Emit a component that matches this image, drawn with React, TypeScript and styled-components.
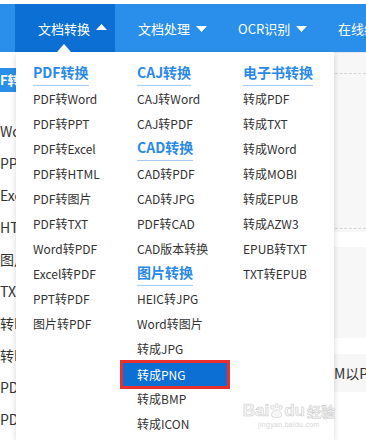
import React from "react";
import styled, { createGlobalStyle } from "styled-components";

const GlobalStyle = createGlobalStyle`
  html, body { margin: 0; padding: 0; background: #fff; }
  body { font-family: "Noto Sans CJK SC", "Noto Sans", sans-serif; }
`;

const Page = styled.div`
  position: relative;
  width: 366px;
  height: 440px;
  overflow: hidden;
  padding-top: 4px;
  box-sizing: border-box;
  display: flex;
  flex-direction: column;
  background: #fff;
`;

const NavBar = styled.div`
  height: 48px;
  flex: none;
  display: flex;
  background: #2a8fea;
  white-space: nowrap;
`;

const NavLead = styled.div`
  width: 15px;
  flex: none;
`;

const NavTab = styled.div<{ $active?: boolean }>`
  width: 100px;
  flex: none;
  box-sizing: border-box;
  padding-left: 23px;
  display: flex;
  align-items: center;
  gap: 6px;
  color: #fff;
  font-size: 13px;
  background: ${(p) => (p.$active ? "#0b6fd3" : "transparent")};
`;

const Caret = ({ up }: { up?: boolean }) => (
  <svg width="11" height="6" viewBox="0 0 11 6" style={{ marginTop: up ? -2 : 1 }}>
    <path d={up ? "M0 6 L5.5 0 L11 6 Z" : "M0 0 L11 0 L5.5 6 Z"} fill="#fff" />
  </svg>
);

const Body = styled.div`
  flex: 1;
  min-height: 0;
  display: flex;
`;

const LeftStrip = styled.div`
  width: 16px;
  flex: none;
  overflow: hidden;
  padding-top: 16px;
  white-space: nowrap;
  display: flex;
  flex-direction: column;
`;

const StripHead = styled.div`
  height: 24px;
  line-height: 24px;
  background: #2a8fea;
  color: #fff;
  font-weight: 700;
  font-size: 13px;
  margin-bottom: 23px;
`;

const StripRow = styled.div`
  height: 32px;
  line-height: 32px;
  font-size: 14px;
  color: #333;
`;

const Panel = styled.div`
  position: relative;
  z-index: 1;
  width: 318px;
  flex: none;
  background: #fff;
  box-shadow: 0 2px 6px rgba(0, 0, 0, 0.16);
  display: flex;
  padding-top: 9px;
  box-sizing: border-box;
`;

const Pointer = styled.div`
  position: absolute;
  top: -8px;
  left: 41px;
  width: 0;
  height: 0;
  border-left: 7.5px solid transparent;
  border-right: 7.5px solid transparent;
  border-bottom: 8px solid #fff;
`;

const Column = styled.div<{ $w: number }>`
  width: ${(p) => p.$w}px;
  flex: none;
  box-sizing: border-box;
  display: flex;
  flex-direction: column;
  align-items: flex-start;
  white-space: nowrap;
`;

const Heading = styled.div`
  margin-left: 17px;
  font-size: 14px;
  font-weight: 700;
  color: #2b89e8;
  line-height: 22px;
  padding-bottom: 2px;
  border-bottom: 1px solid #a6ccf4;
`;

const Item = styled.div<{ $hl?: boolean }>`
  box-sizing: border-box;
  font-size: 12px;
  color: ${(p) => (p.$hl ? "#fff" : "#333")};
  height: ${(p) => (p.$hl ? "29px" : "25px")};
  line-height: ${(p) => (p.$hl ? "23px" : "25px")};
  padding-left: ${(p) => (p.$hl ? "14px" : "17px")};
  width: ${(p) => (p.$hl ? "110px" : "auto")};
  background: ${(p) => (p.$hl ? "#0b6fd3" : "transparent")};
  border: ${(p) => (p.$hl ? "3px solid #e8302e" : "none")};
  margin: ${(p) => (p.$hl ? "-1px 0 -3px" : "0")};
`;

const RightStrip = styled.div`
  flex: 1;
  min-width: 0;
  display: flex;
  flex-direction: column;
  white-space: nowrap;
  overflow: hidden;
`;

const GreyBox = styled.div<{ $h: number; $gap: number; $top?: boolean }>`
  height: ${(p) => p.$h}px;
  margin-bottom: ${(p) => p.$gap}px;
  background: #f7f7f7;
  border-top: ${(p) => (p.$top ? "1px solid #e6e6e6" : "none")};
  box-sizing: border-box;
  font-size: 14px;
  color: #333;
  line-height: ${(p) => p.$h}px;
`;

const DashedFrame = styled.div`
  margin: 20px 0 0 1px;
  height: 154px;
  border-top: 1px dashed #d6d6d6;
  border-bottom: 1px dashed #d6d6d6;
`;

const Watermark = styled.div`
  position: absolute;
  z-index: 5;
  right: 31px;
  bottom: 12px;
  display: flex;
  flex-direction: column;
  align-items: center;
  color: #f6f6f6;
  -webkit-text-stroke: 0.6px #cfcfcf;
  pointer-events: none;
`;

const MarkTop = styled.div`
  display: flex;
  align-items: center;
  font-family: "Liberation Sans", sans-serif;
  font-weight: 700;
  font-size: 17px;
  line-height: 20px;
`;

const MarkCn = styled.span`
  font-family: "Noto Sans CJK SC", sans-serif;
  font-size: 14px;
  margin-left: 2px;
`;

const MarkSub = styled.div`
  font-family: "Liberation Sans", sans-serif;
  font-size: 7px;
  letter-spacing: 0.3px;
  -webkit-text-stroke: 0;
  color: #d6d6d6;
`;

const Paw = () => (
  <svg width="15" height="17" viewBox="0 0 18 20">
    <g fill="#f6f6f6" stroke="#cfcfcf" strokeWidth="0.8">
      <ellipse cx="4" cy="5" rx="2" ry="2.6" />
      <ellipse cx="9" cy="3" rx="2" ry="2.6" />
      <ellipse cx="14" cy="5" rx="2" ry="2.6" />
      <path d="M3 15 C3 10 6 8 9 8 C12 8 15 10 15 15 C15 18 3 18 3 15 Z" />
    </g>
  </svg>
);

const col1 = ["PDF转Word", "PDF转PPT", "PDF转Excel", "PDF转HTML", "PDF转图片", "PDF转TXT", "Word转PDF", "Excel转PDF", "PPT转PDF", "图片转PDF"];
const col3 = ["转成PDF", "转成TXT", "转成Word", "转成MOBI", "转成EPUB", "转成AZW3", "EPUB转TXT", "TXT转EPUB"];
const leftRows = ["Wo", "PP", "Exc", "HT", "图片", "TXT", "转P", "转PI", "PD", "PD"];

export default function App() {
  return (
    <Page>
      <GlobalStyle />
      <NavBar>
        <NavLead />
        <NavTab $active>
          文档转换 <Caret up />
        </NavTab>
        <NavTab>
          文档处理 <Caret />
        </NavTab>
        <NavTab>
          OCR识别 <Caret />
        </NavTab>
        <NavTab>在线编辑</NavTab>
      </NavBar>
      <Body>
        <LeftStrip>
          <StripHead>F转</StripHead>
          {leftRows.map((t, i) => (
            <StripRow key={i}>{t}</StripRow>
          ))}
        </LeftStrip>
        <Panel>
          <Pointer />
          <Column $w={104}>
            <Heading>PDF转换</Heading>
            {col1.map((t) => (
              <Item key={t}>{t}</Item>
            ))}
          </Column>
          <Column $w={106}>
            <Heading>CAJ转换</Heading>
            <Item>CAJ转Word</Item>
            <Item>CAJ转PDF</Item>
            <Heading>CAD转换</Heading>
            <Item>CAD转PDF</Item>
            <Item>CAD转JPG</Item>
            <Item>PDF转CAD</Item>
            <Item>CAD版本转换</Item>
            <Heading>图片转换</Heading>
            <Item>HEIC转JPG</Item>
            <Item>Word转图片</Item>
            <Item>转成JPG</Item>
            <Item $hl>转成PNG</Item>
            <Item>转成BMP</Item>
            <Item>转成ICON</Item>
          </Column>
          <Column $w={108}>
            <Heading>电子书转换</Heading>
            {col3.map((t) => (
              <Item key={t}>{t}</Item>
            ))}
          </Column>
        </Panel>
        <RightStrip>
          <GreyBox $h={180} $gap={15} $top>
            <DashedFrame />
          </GreyBox>
          <GreyBox $h={91} $gap={16} />
          <GreyBox $h={38} $gap={0}>M以P</GreyBox>
        </RightStrip>
      </Body>
      <Watermark>
        <MarkTop>
          Bai
          <Paw />
          du
          <MarkCn>经验</MarkCn>
        </MarkTop>
        <MarkSub>jingyan.baidu.com</MarkSub>
      </Watermark>
    </Page>
  );
}
